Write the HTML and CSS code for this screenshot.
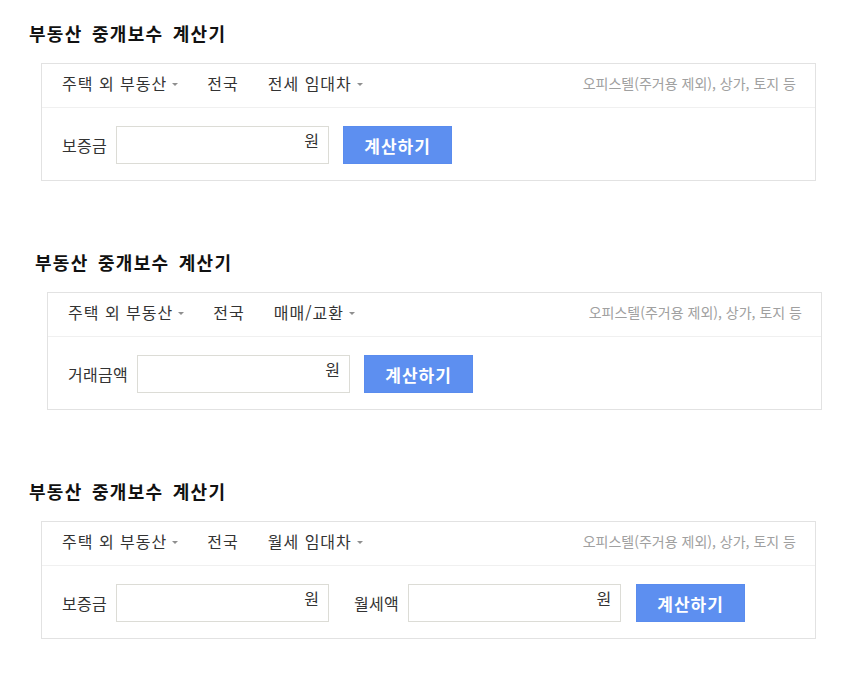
FILE: index.html
```html
<!DOCTYPE html>
<html lang="ko">
<head>
<meta charset="utf-8">
<title>부동산 중개보수 계산기</title>
<link rel="stylesheet" href="styles.css">
</head>
<body>
<section class="calc">
  <h2 class="calc__title">부동산 중개보수 계산기</h2>
  <div class="calc__box">
    <div class="calc__head">
      <ul class="calc__tabs">
        <li class="calc__tab calc__tab--drop">주택 외 부동산</li>
        <li class="calc__tab">전국</li>
        <li class="calc__tab calc__tab--drop">전세 임대차</li>
      </ul>
      <p class="calc__note">오피스텔(주거용 제외), 상가, 토지 등</p>
    </div>
    <div class="calc__body">
      <label class="calc__label">보증금</label>
      <div class="calc__field"><input class="calc__input" type="text"><span class="calc__unit">원</span></div>
      <button class="calc__btn" type="button">계산하기</button>
    </div>
  </div>
</section>

<section class="calc calc--shift">
  <h2 class="calc__title">부동산 중개보수 계산기</h2>
  <div class="calc__box">
    <div class="calc__head">
      <ul class="calc__tabs">
        <li class="calc__tab calc__tab--drop">주택 외 부동산</li>
        <li class="calc__tab">전국</li>
        <li class="calc__tab calc__tab--drop">매매/교환</li>
      </ul>
      <p class="calc__note">오피스텔(주거용 제외), 상가, 토지 등</p>
    </div>
    <div class="calc__body">
      <label class="calc__label">거래금액</label>
      <div class="calc__field"><input class="calc__input" type="text"><span class="calc__unit">원</span></div>
      <button class="calc__btn" type="button">계산하기</button>
    </div>
  </div>
</section>

<section class="calc">
  <h2 class="calc__title">부동산 중개보수 계산기</h2>
  <div class="calc__box">
    <div class="calc__head">
      <ul class="calc__tabs">
        <li class="calc__tab calc__tab--drop">주택 외 부동산</li>
        <li class="calc__tab">전국</li>
        <li class="calc__tab calc__tab--drop">월세 임대차</li>
      </ul>
      <p class="calc__note">오피스텔(주거용 제외), 상가, 토지 등</p>
    </div>
    <div class="calc__body">
      <label class="calc__label">보증금</label>
      <div class="calc__field"><input class="calc__input" type="text"><span class="calc__unit">원</span></div>
      <label class="calc__label calc__label--second">월세액</label>
      <div class="calc__field"><input class="calc__input" type="text"><span class="calc__unit">원</span></div>
      <button class="calc__btn calc__btn--wide-gap" type="button">계산하기</button>
    </div>
  </div>
</section>
</body>
</html>
```

FILE: styles.css
```css
* { box-sizing: border-box; }

html, body {
  margin: 0;
  padding: 0;
  background: #ffffff;
}

body {
  font-family: "Noto Sans CJK KR", "Noto Sans", sans-serif;
  color: #333333;
  padding-top: 21px;
}

.calc {
  padding-left: 29px;
  margin-bottom: 69px;
}

.calc--shift {
  padding-left: 35px;
}

.calc__title {
  margin: 0 0 18px;
  font-size: 18px;
  line-height: 24px;
  font-weight: 700;
  letter-spacing: 1.3px;
  word-spacing: 3px;
  color: #111111;
}

.calc__box {
  margin-left: 12px;
  width: 775px;
  border: 1px solid #e2e2e2;
  background: #ffffff;
}

.calc__head {
  height: 44px;
  padding: 0 19px 5px 20px;
  border-bottom: 1px solid #f0f0f0;
  display: flex;
  align-items: center;
  justify-content: space-between;
}

.calc__tabs {
  list-style: none;
  margin: 0;
  padding: 0;
  display: flex;
  align-items: center;
  gap: 29px;
}

.calc__tab {
  font-size: 16px;
  line-height: 20px;
  letter-spacing: 1px;
  color: #333333;
  display: flex;
  align-items: center;
}

.calc__tab--drop::after {
  content: "";
  display: block;
  margin-left: 5px;
  margin-top: 3px;
  width: 0;
  height: 0;
  border-left: 3px solid transparent;
  border-right: 3px solid transparent;
  border-top: 3px solid #8f8f8f;
}

.calc__note {
  margin: 0;
  font-size: 14px;
  line-height: 18px;
  color: #a0a0a0;
}

.calc__body {
  padding: 18px 20px 16px;
  display: flex;
  align-items: center;
}

.calc__label {
  font-size: 16px;
  line-height: 20px;
  letter-spacing: 0.3px;
  color: #333333;
  margin-right: 9px;
}

.calc__label--second {
  margin-left: 25px;
}

.calc__field {
  position: relative;
  width: 213px;
  height: 38px;
}

.calc__input {
  width: 100%;
  height: 100%;
  margin: 0;
  border: 1px solid #dcdcd6;
  background: #ffffff;
  padding: 0 34px 0 10px;
  font: inherit;
  outline: none;
}

.calc__unit {
  position: absolute;
  right: 10px;
  top: 4px;
  font-size: 16px;
  line-height: 20px;
  color: #333333;
}

.calc__btn {
  margin: 0 0 0 14px;
  width: 109px;
  height: 38px;
  border: 1px solid #5a8cee;
  background: #5d8ff0;
  color: #ffffff;
  font-family: inherit;
  font-size: 17px;
  font-weight: 700;
  letter-spacing: 1px;
  padding: 0;
  cursor: pointer;
}

.calc__btn--wide-gap {
  margin-left: 15px;
}
```
